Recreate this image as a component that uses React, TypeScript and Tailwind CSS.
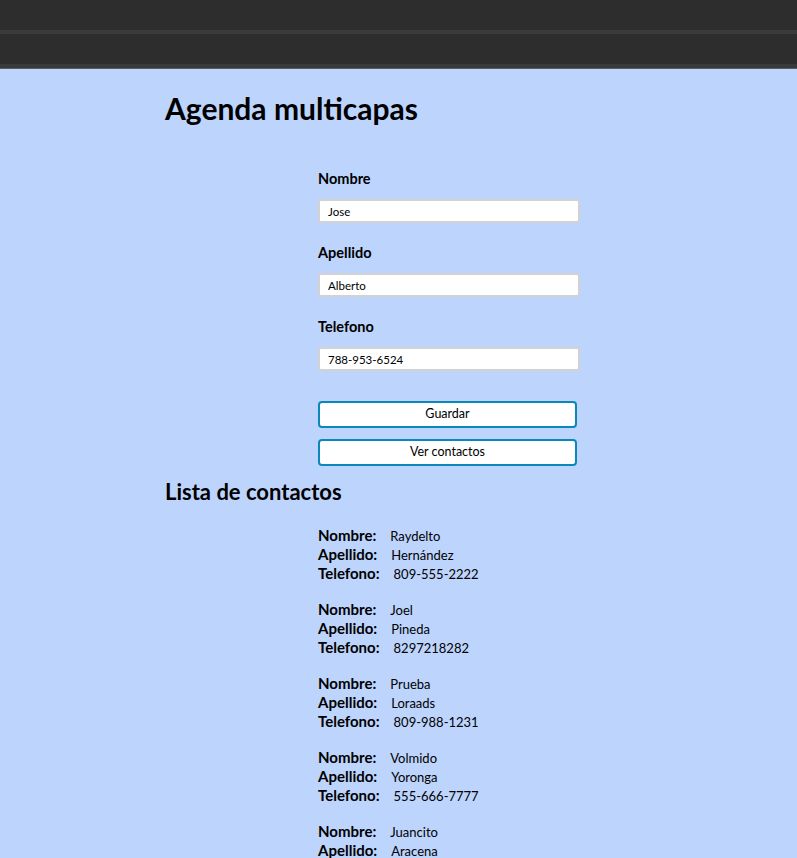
import React from 'react';

const contacts = [
  { nombre: 'Raydelto', apellido: 'Hernández', telefono: '809-555-2222' },
  { nombre: 'Joel', apellido: 'Pineda', telefono: '8297218282' },
  { nombre: 'Prueba', apellido: 'Loraads', telefono: '809-988-1231' },
  { nombre: 'Volmido', apellido: 'Yoronga', telefono: '555-666-7777' },
  { nombre: 'Juancito', apellido: 'Aracena', telefono: '809-000-0000' },
];

function Field({ label, value }: { label: string; value: string }) {
  return (
    <div className="flex flex-col">
      <label className="h-[20px] text-[14.5px] font-bold leading-[20px]">{label}</label>
      <input
        readOnly
        value={value}
        className="mt-[10px] h-[24px] w-[262px] rounded-[3px] border-2 border-[#d2d2d2] bg-white px-[8px] text-[11.5px] outline-none"
      />
    </div>
  );
}

function Row({ label, value }: { label: string; value: string }) {
  return (
    <div className="flex h-[19px] items-baseline leading-[19px]">
      <span className="text-[15px] font-bold">{label}</span>
      <span className="ml-[14px] text-[13px]">{value}</span>
    </div>
  );
}

export default function App() {
  return (
    <div className="h-[858px] overflow-hidden bg-[#bdd4fd] font-['Lato','Open_Sans',sans-serif] text-black">
      {/* toolbar */}
      <div className="h-[30px] bg-[#2d2d2d]" />
      <div className="h-[4px] bg-[#3b3b3b]" />
      <div className="h-[30px] bg-[#2d2d2d]" />
      <div className="h-[4px] bg-[#3a3a3a]" />
      <div className="h-[1px] bg-[#5a5a5a]" />

      <div className="pl-[165px]">
        <h1 className="pt-[19px] text-[30px] font-bold leading-[40px]">Agenda multicapas</h1>

        <form className="ml-[153px] mt-[41px] flex flex-col gap-[20px]">
          <Field label="Nombre" value="Jose" />
          <Field label="Apellido" value="Alberto" />
          <Field label="Telefono" value="788-953-6524" />
        </form>

        <div className="ml-[153px] mt-[30px] flex w-[259px] flex-col gap-[11px]">
          <button className="h-[27px] rounded-[4px] border-2 border-[#0a88bc] bg-white text-[12.5px]">Guardar</button>
          <button className="h-[27px] rounded-[4px] border-2 border-[#0a88bc] bg-white text-[12.5px]">Ver contactos</button>
        </div>

        <h2 className="mt-[12px] text-[22px] font-bold leading-[28px]">Lista de contactos</h2>

        <div className="ml-[153px] mt-[20px] flex flex-col gap-[17px]">
          {contacts.map((c) => (
            <div key={c.nombre} className="flex flex-col">
              <Row label="Nombre:" value={c.nombre} />
              <Row label="Apellido:" value={c.apellido} />
              <Row label="Telefono:" value={c.telefono} />
            </div>
          ))}
        </div>
      </div>
    </div>
  );
}
